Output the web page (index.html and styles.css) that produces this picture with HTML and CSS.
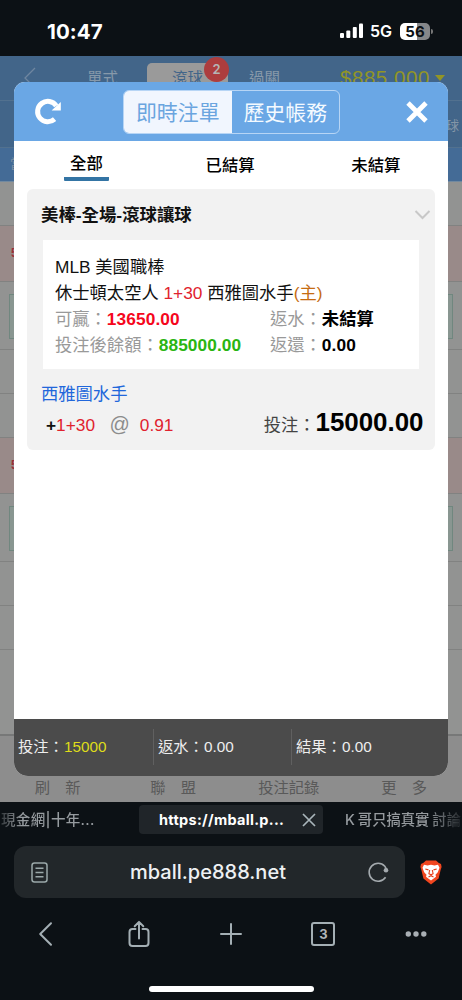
FILE: index.html
```html
<!DOCTYPE html>
<html lang="zh-Hant">
<head>
<meta charset="utf-8">
<meta name="viewport" content="width=device-width">
<title>即時注單</title>
<link rel="stylesheet" href="styles.css">
</head>
<body>
<header class="status">
  <span class="clock">10:47</span>
  <svg class="signal" width="24" height="16" viewBox="0 0 24 16" fill="#fff"><rect x="0" y="10" width="4" height="5" rx="1"/><rect x="6.3" y="7.5" width="4" height="7.500" rx="1"/><rect x="12.800" y="4" width="4" height="11" rx="1"/><rect x="19" y="0.500" width="4" height="14.500" rx="1"/></svg>
  <span class="net">5G</span>
  <span class="battery">56</span><i class="battery-cap"></i>
</header>
<main class="app">
  <div class="navbar">
    <svg class="nav-back" width="12" height="22" viewBox="0 0 12 22" fill="none" stroke="#6f86a0" stroke-width="1.300"><path d="M11 1 1 11l10 10"/></svg>
    <span class="nav-item">單式</span>
    <span class="nav-item nav-active">滾球<b class="badge">2</b></span>
    <span class="nav-item">過關</span>
    <span class="balance">$885,000</span><i class="caret"></i>
  </div>
  <div class="subnav"><span>球</span></div>
  <div class="subnav2"><span>當</span></div>
  <div class="row r1"></div>
  <div class="row pink r2"><span>5</span></div>
  <div class="row odds"><i></i></div>
  <div class="row r3"></div>
  <div class="row r4"></div>
  <div class="row pink r5"><span>5</span></div>
  <div class="row odds"><i></i></div>
  <div class="row r3"></div>
  <div class="row r4"></div>
  <div class="row r6"></div>
  <nav class="appbar"><span class="wide">刷 新</span><span class="wide">聯 盟</span><span>投注記錄</span><span class="wide">更 多</span></nav>

  <section class="modal">
    <div class="modal-head">
      <svg class="reload" width="28" height="28" viewBox="0 0 28 28"><path d="M20.600 21.200A10.200 10.200 0 1 1 22.300 7.900" fill="none" stroke="#fff" stroke-width="5"/><path d="M26.800 4V12.600H17.600Z" fill="#fff"/></svg>
      <div class="segment"><span class="on">即時注單</span><span>歷史帳務</span></div>
      <svg class="close" width="22" height="22" viewBox="0 0 22 22" stroke="#fff" stroke-width="4.800"><path d="m2 2 18 18M20 2 2 20"/></svg>
    </div>
    <div class="tabs"><span class="tab-on">全部</span><span>已結算</span><span>未結算</span></div>
    <div class="content">
      <article class="card">
        <div class="card-title"><h2>美棒-全場-滾球讓球</h2><svg width="17" height="10" viewBox="0 0 17 10" fill="none" stroke="#c8c8c8" stroke-width="2"><path d="m1.500 1 7 7 7-7"/></svg></div>
        <div class="detail">
          <p>MLB 美國職棒</p>
          <p>休士頓太空人 <em class="red">1+30</em> 西雅圖水手<em class="orange">(主)</em></p>
          <p class="pair"><span class="muted">可贏：<b class="win">13650.00</b></span><span class="muted">返水：<b>未結算</b></span></p>
          <p class="pair"><span class="muted">投注後餘額：<b class="green">885000.00</b></span><span class="muted">返還：<b>0.00</b></span></p>
        </div>
        <p class="pick">西雅圖水手</p>
        <div class="stake"><b>+</b><em class="red">1+30</em><span class="at">@</span><em class="red">0.91</em><span class="amount-label">投注：</span><b class="amount">15000.00</b></div>
      </article>
    </div>
    <footer class="totals"><span>投注：<em>15000</em></span><span>返水：0.00</span><span>結果：0.00</span></footer>
  </section>
</main>
<div class="browser">
  <div class="btabs">
    <span class="btab left">現金網|十年...</span>
    <span class="btab current">https://mball.p...<svg width="14" height="14" viewBox="0 0 14 14" stroke="#a9b5ba" stroke-width="1.700"><path d="m1 1 12 12M13 1 1 13"/></svg></span>
    <span class="btab right">K 哥只搞真實 討論</span>
  </div>
  <div class="address">
    <div class="urlbox">
      <svg width="17" height="21" viewBox="0 0 17 21" fill="none" stroke="#9aa8a9" stroke-width="1.500"><rect x="1" y="1" width="15" height="19" rx="2.500"/><path d="M4.500 6.300h8M4.500 10.500h8M4.500 14.700h8"/></svg>
      <span>mball.pe888.net</span>
      <svg width="21" height="21" viewBox="0 0 21 21" fill="none" stroke="#a4aaae" stroke-width="1.600"><path d="M17.600 15.300A9 9 0 1 1 16.800 4.200l1.800 3.300"/><circle cx="18" cy="8.300" r="2.300" fill="#a4aaae" stroke="none"/></svg>
    </div>
    <svg class="brave" width="22" height="25" viewBox="0 0 22 25"><path fill="#f1461f" d="M6 .5h10l2.500 2.200L21 4l.6 3-1 3-2 8.500L11 24.500 3.400 18.500 1.400 10l-1-3L1 4l2.500-1.300Z"/><path fill="#fff" d="m4 4.800 3.500.7L11 4.700l3.500.8 3.500-.7 1.500 3-1.700 4.500-2.300 2.500.5 2L11 20.600l-5-3.800.5-2-2.300-2.500L2.500 7.800Z"/><path d="m5.300 9 3.200.9M16.700 9l-3.200.9M9.700 10l-.8 3.700L11 14.800l2.100-1.100-.8-3.700M8.500 17l2.500-1.300 2.500 1.300" fill="none" stroke="#e83d19" stroke-width="1.100"/></svg>
  </div>
  <div class="tools">
    <svg width="28" height="28" viewBox="0 0 28 28"><path d="M19 3.300 8.200 14 19 24.800"/></svg>
    <svg width="28" height="28" viewBox="0 0 28 28"><path d="M10.500 9H7.500a3 3 0 0 0-3 3v11a3 3 0 0 0 3 3h13a3 3 0 0 0 3-3V12a3 3 0 0 0-3-3h-3M14 18.500V2M9.700 6.200 14 1.900l4.300 4.300"/></svg>
    <svg width="28" height="28" viewBox="0 0 28 28"><path d="M14 4v20M4 14h20"/></svg>
    <span class="count"><b>3</b></span>
    <svg width="28" height="28" viewBox="0 0 28 28"><g fill="#a9afb4" stroke="none"><circle cx="6.300" cy="14" r="2.700"/><circle cx="14" cy="14" r="2.700"/><circle cx="21.800" cy="14" r="2.700"/></g></svg>
  </div>
  <i class="home"></i>
</div>
</body>
</html>
```
FILE: styles.css
```css
* { box-sizing: border-box; }
body { margin: 0; width: 462px; height: 1000px; overflow: hidden; background: #0c1115; color: #111; font-family: "Liberation Sans", "Noto Sans CJK TC", sans-serif; display: flex; flex-direction: column; }
h2, p { margin: 0; }
em { font-style: normal; }
svg { flex: none; }

.status { height: 56px; flex: none; display: flex; align-items: center; padding: 6px 31px 0 47px; color: #fff; font-family: Inter, sans-serif; font-weight: 600; }
.clock { font-size: 20.500px; font-weight: 700; letter-spacing: .1px; margin-right: auto; }
.net { font-size: 16px; margin: 0 8px 0 6px; font-weight: 600; }
.battery { width: 30px; height: 17px; border-radius: 5px; background: linear-gradient(90deg, #fff 56%, #858789 56%); color: #0c1115; font-size: 15px; line-height: 17px; text-align: center; font-weight: 700; }
.battery-cap { width: 2px; height: 5px; margin-left: 1px; margin-right: -2px; background: #777; border-radius: 0 2px 2px 0; }

.app { position: relative; height: 746px; flex: none; background: #929392; overflow: hidden; }
.navbar { height: 45px; background: #426589; border-bottom: 1px solid #52718f; display: flex; align-items: center; padding-left: 24px; color: #8799aa; font-size: 15.500px; }
.nav-back { margin: 0 51px 0 0; }
.nav-item { width: 81px; height: 30px; line-height: 31px; flex: none; position: relative; }
.nav-active { text-align: center; background: #9a9a9a; color: #426589; border-radius: 5px; margin-left: -21px; margin-right: 21px; }
.nav-active + .nav-item { width: 91px; }
.badge { position: absolute; right: -1px; top: -6px; width: 25px; height: 25px; border-radius: 50%; background: #ad3d3e; color: #b5b5b5; font: 600 13px/25px Inter, sans-serif; }
.balance { font: 20.500px/28px "Liberation Sans", sans-serif; color: #929526; letter-spacing: .55px; }
.caret { border: 5px solid transparent; border-top: 6px solid #929526; border-bottom: 0; margin-left: 5px; }
.subnav { height: 47px; background: #426589; border-bottom: 1px solid #52718f; display: flex; align-items: center; justify-content: flex-end; padding-right: 3px; color: #8496a7; font-size: 13px; }
.subnav2 { height: 34px; background: #446b96; border-bottom: 1px solid #7189a0; color: #7d90a3; font-size: 13px; padding: 6px 0 0 10px; line-height: 20px; }
.row { border-bottom: 1px solid #818281; }
.pink { background: #998a89; color: #9b3039; font: 700 12px/54px "Liberation Sans", sans-serif; padding-left: 11px; }
.r1 { height: 44px; }
.r2 { height: 56px; }
.odds { height: 68px; padding: 12px 9px 11px; }
.odds i { display: block; height: 45px; border: 1px solid #70877f; background: #899691; }
.r3 { height: 44px; }
.r4 { height: 44px; }
.r5 { height: 56px; }
.r6 { height: 86px; border-bottom: 2px solid #777878; }
.appbar { display: grid; grid-template-columns: repeat(4, 115.5px); height: 68px; padding-top: 43px; background: #8d8d8d; color: #595959; font-size: 15.300px; line-height: 18px; text-align: center; }
.wide { word-spacing: 11px; }

.modal { position: absolute; left: 14px; top: 26px; width: 433.500px; height: 694px; display: flex; flex-direction: column; border-radius: 11px 11px 14px 14px; overflow: hidden; background: #fff; }
.modal-head { height: 59px; flex: none; background: #6aa7e5; display: flex; align-items: center; justify-content: space-between; padding: 0 20px 0 20px; }
.segment { display: grid; grid-template-columns: 108px 1fr; width: 217px; height: 44px; margin: 1px 5px 0 0; border: 1px solid #b7d5f5; border-radius: 6px; overflow: hidden; font-size: 20.900px; line-height: 43px; text-align: center; color: #f4faff; }
.segment .on { background: #f1f6fe; color: #6aa5df; }
.tabs { height: 48px; flex: none; display: flex; font-size: 16.400px; line-height: 22px; font-weight: 500; padding: 13px 47px 0 50px; justify-content: space-between; color: #000; }
.tabs .tab-on { width: 45px; height: 29px; margin-top: -2px; text-align: center; border-bottom: 4px solid #3374a4; border-radius: 1px; }
.content { flex: 1; padding: 0 12.500px 0 13px; }
.card { height: 261px; background: #f2f2f2; border-radius: 6px; font-size: 17.300px; line-height: 26px; }
.card-title { height: 51px; display: flex; align-items: center; justify-content: space-between; padding: 0 4px 0 14px; }
.card-title h2 { font-size: 17.400px; line-height: 26px; font-weight: 700; }
.detail { margin: 0 16px; height: 129px; background: #fff; padding: 13.500px 0 0 12px; }
.detail p { height: 26px; white-space: nowrap; }
.pair { display: grid; grid-template-columns: 215px 1fr; }
.muted { color: #999; }
.muted b { color: #000; letter-spacing: .1px; }
.red { color: #e0222e; }
.orange { color: #c66c12; }
.muted .win { color: #f5061c; }
.muted .green { color: #2ab512; }
.pick { color: #2167db; padding: 12px 0 0 14px; }
.stake { display: flex; align-items: baseline; padding: 0 11.500px 0 19px; margin-top: -1.500px; line-height: 33px; }
.at { color: #8c8c8c; font-size: 20px; margin: 0 10px 0 14.500px; }
.amount-label { margin-left: auto; color: #444; }
.amount { font-size: 25.900px; color: #000; }
.totals { height: 57px; flex: none; display: grid; grid-template-columns: 140px 138px 1fr; background: #4b4b4b; color: #eee; font-size: 15.300px; line-height: 36px; padding-top: 10px; }
.totals span { height: 36px; padding-left: 4px; border-right: 1px solid #606060; white-space: nowrap; }
.totals span:last-child { border: 0; }
.totals em { color: #dfdc1a; }

.browser { flex: 1; background: #0c1115; display: flex; flex-direction: column; font-family: Inter, "Noto Sans CJK TC", sans-serif; }
.btabs { height: 44px; display: flex; padding-top: 3px; overflow: hidden; }
.btab { height: 29px; line-height: 29px; color: #969b9f; font-size: 14.500px; white-space: nowrap; font-weight: 500; flex: none; }
.btab.left { width: 139px; padding-left: 1px; letter-spacing: .35px; -webkit-mask-image: linear-gradient(90deg, #0004, #000 22px); mask-image: linear-gradient(90deg, #0004, #000 22px); }
.btab.current { width: 184px; background: #202529; border-radius: 4px; color: #fff; font-weight: 700; letter-spacing: .3px; display: flex; align-items: center; justify-content: space-between; padding: 0 7px 0 20px; }
.btab.right { width: 139px; padding-left: 22px; font-size: 14.300px; word-spacing: -.8px; -webkit-mask-image: linear-gradient(90deg, #000 75%, #0002); mask-image: linear-gradient(90deg, #000 75%, #0002); }
.address { display: flex; align-items: center; height: 52px; padding-left: 14px; gap: 15px; }
.urlbox { width: 391px; height: 52px; border-radius: 12px; background: #22272a; display: flex; align-items: center; justify-content: space-between; padding: 0 16px 0 17px; color: #eef1f3; font-size: 20px; font-weight: 500; }
.tools { height: 71px; display: grid; grid-template-columns: repeat(5, 92.4px); align-items: center; justify-items: center; }
.tools svg { fill: none; stroke: #a4afb4; stroke-width: 2; stroke-linecap: round; stroke-linejoin: round; }
.count { width: 24px; height: 24px; border: 2px solid #a4afb4; border-radius: 3px; color: #b0b5b8; font-size: 13px; line-height: 20px; text-align: center; }
.home { width: 165px; height: 6px; border-radius: 3px; background: #fff; margin: 17px 0 0 148.500px; }
```
